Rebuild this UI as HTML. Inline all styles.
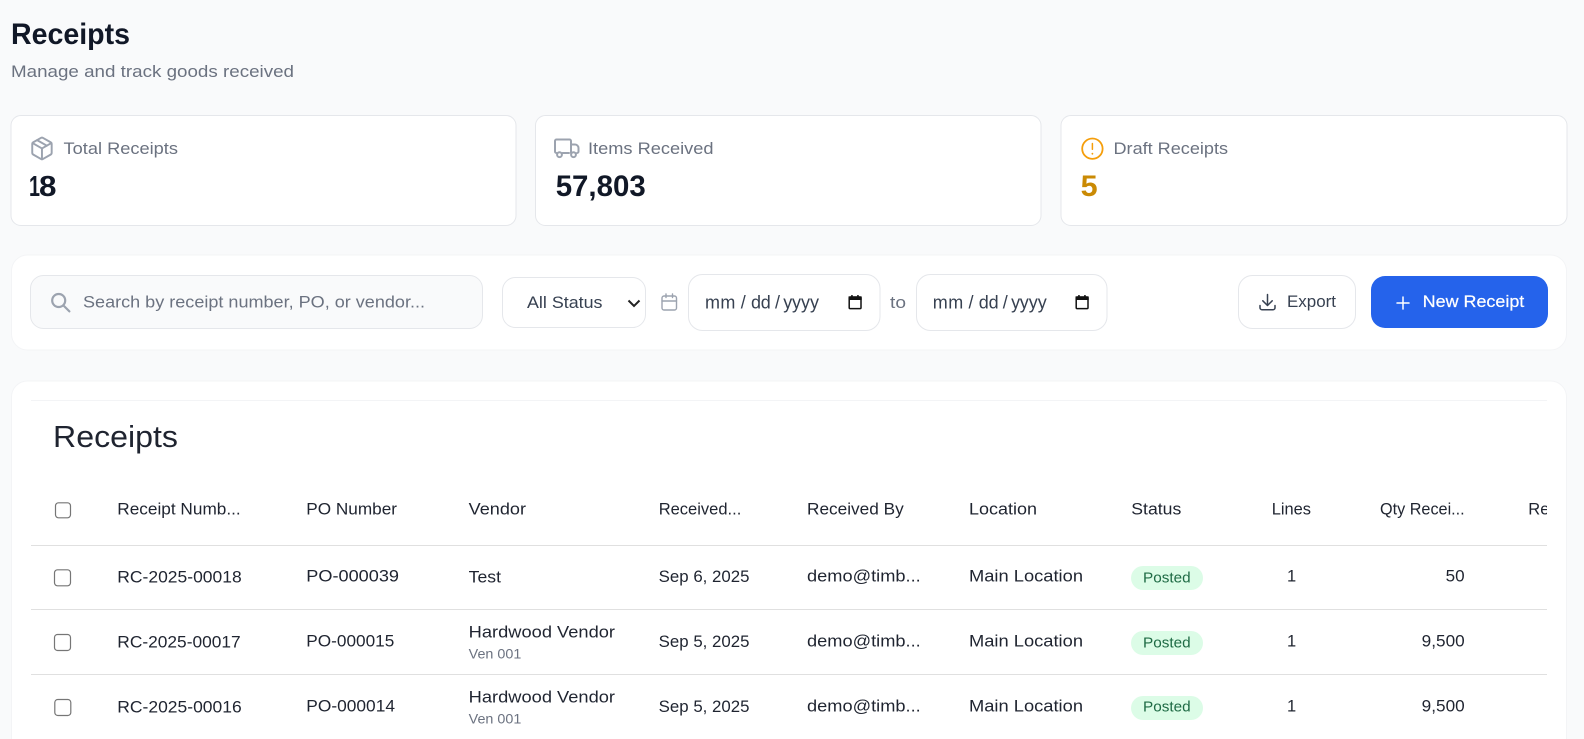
<!DOCTYPE html>
<html lang="en">
<head>
<meta charset="utf-8">
<title>Receipts</title>
<style>
html,body{margin:0;padding:0;width:1584px;height:739px;overflow:hidden;background:#f9fafb}
svg{display:block;font-family:"Liberation Sans",Arial,sans-serif}
.t{font-size:16.5px;fill:#1f2430;transform:translateY(-.6px)}
.g{font-size:17px;fill:#6b7280;transform:translateY(-.5px)}
.b{font-size:14.5px;fill:#1f6b45;transform:translateY(-.6px)}
.v{font-size:14px;fill:#6b7280;transform:translateY(-.6px)}
.d{font-size:18px;fill:#374151}
.ic{fill:none;stroke-linecap:round;stroke-linejoin:round}
</style>
</head>
<body>
<svg width="1584" height="739" viewBox="0 0 1584 739" xmlns="http://www.w3.org/2000/svg">
<defs><clipPath id="c"><rect x="31" y="490" width="1516" height="60"/></clipPath></defs>
<rect width="1584" height="739" fill="#f9fafb"/>

<!-- header -->
<text x="11" y="44" font-size="30" font-weight="700" fill="#111827" textLength="119" lengthAdjust="spacingAndGlyphs">Receipts</text>
<text x="11" y="77" class="g" style="transform:none" textLength="283" lengthAdjust="spacingAndGlyphs">Manage and track goods received</text>

<!-- stat cards -->
<rect x="11" y="115.5" width="505" height="110" rx="10" fill="#fff" stroke="#e5e7eb"/>
<rect x="535.5" y="115.5" width="505.5" height="110" rx="10" fill="#fff" stroke="#e5e7eb"/>
<rect x="1061" y="115.5" width="506" height="110" rx="10" fill="#fff" stroke="#e5e7eb"/>

<g class="ic" stroke="#9ca3af" stroke-width="1.8" transform="translate(29 135.5) scale(1.08)">
<path d="M11 21.73a2 2 0 0 0 2 0l7-4A2 2 0 0 0 21 16V8a2 2 0 0 0-1-1.73l-7-4a2 2 0 0 0-2 0l-7 4A2 2 0 0 0 3 8v8a2 2 0 0 0 1 1.73z"/>
<path d="M12 22V12"/><path d="m3.3 7 8.7 5 8.7-5"/><path d="m7.5 4.27 9 5.15"/>
</g>
<text x="63.5" y="154.3" class="g" textLength="114.5" lengthAdjust="spacingAndGlyphs">Total Receipts</text>
<text x="29" y="196" font-size="29" font-weight="700" fill="#111827" textLength="11" lengthAdjust="spacingAndGlyphs">1</text>
<text x="39" y="196" font-size="29" font-weight="700" fill="#111827" textLength="17.5" lengthAdjust="spacingAndGlyphs">8</text>

<g class="ic" stroke="#9ca3af" stroke-width="2">
<path d="M562.5 153h6.5M571 153V141a1.5 1.5 0 0 0-1.5-1.5H556.5A1.5 1.5 0 0 0 555 141v10.5a1.5 1.5 0 0 0 1.5 1.5"/>
<path d="M571 144.5h4a3.5 3.5 0 0 1 3.5 3.5v3.5a1.5 1.5 0 0 1-1.5 1.5"/>
<circle cx="559.5" cy="154.7" r="2.4"/><circle cx="573.5" cy="154.7" r="2.4"/>
</g>
<text x="588" y="154.3" class="g" textLength="125.5" lengthAdjust="spacingAndGlyphs">Items Received</text>
<text x="555.7" y="196" font-size="29.5" font-weight="700" fill="#111827" textLength="90" lengthAdjust="spacingAndGlyphs">57,803</text>

<g class="ic" stroke="#f59e0b" stroke-width="1.8">
<circle cx="1092.4" cy="148.7" r="10.2"/>
<path d="M1092.4 143.5v5.8" stroke-width="1.5"/><path d="M1092.4 153.6v.2"/>
</g>
<text x="1113.5" y="154.3" class="g" textLength="114.5" lengthAdjust="spacingAndGlyphs">Draft Receipts</text>
<text x="1080.6" y="196" font-size="29.5" font-weight="700" fill="#ca8a04" textLength="17" lengthAdjust="spacingAndGlyphs">5</text>

<!-- toolbar -->
<rect x="11.5" y="255" width="1555" height="95" rx="16" fill="#fff" stroke="#f3f4f6"/>
<rect x="30.5" y="275.5" width="452" height="53" rx="13" fill="#f9fafb" stroke="#e5e7eb"/>
<g class="ic" stroke="#9ca3af" stroke-width="2.2">
<circle cx="58.7" cy="300.5" r="6.5"/><path d="M63.6 305.6l5.8 5.8"/>
</g>
<text x="83" y="307.3" font-size="16.5" fill="#6b7280" textLength="342" lengthAdjust="spacingAndGlyphs">Search by receipt number, PO, or vendor...</text>

<rect x="502.5" y="277.5" width="143" height="50" rx="13" fill="#fff" stroke="#e5e7eb"/>
<text x="527" y="308" font-size="16.5" fill="#374151" textLength="75.5" lengthAdjust="spacingAndGlyphs">All Status</text>
<path d="M628.5 300.5l5.5 5.5 5.5-5.5" fill="none" stroke="#222" stroke-width="2"/>

<g class="ic" stroke="#9ca3af" stroke-width="1.4">
<rect x="662" y="296" width="14.5" height="14" rx="2"/><path d="M662 301h14.5"/><path d="M666 294v3.5"/><path d="M672.5 294v3.5"/>
</g>

<rect x="688.5" y="274.5" width="191.5" height="56" rx="14" fill="#fff" stroke="#e5e7eb"/>
<text class="d" y="308.3" x="705 720.4 740.7 751 760.8 775 783.3 792 801 810">mm/dd/yyyy</text>
<g>
<rect x="849.2" y="297" width="11.8" height="11.6" rx="1" fill="#fff" stroke="#111" stroke-width="1.5"/>
<rect x="848.5" y="296.4" width="13.2" height="3.6" fill="#111"/>
<rect x="851.2" y="295" width="1.5" height="2" fill="#111"/><rect x="857.2" y="295" width="1.5" height="2" fill="#111"/>
</g>
<text x="890" y="308" font-size="17" fill="#6b7280" textLength="16" lengthAdjust="spacingAndGlyphs">to</text>

<rect x="916.5" y="274.5" width="190.5" height="56" rx="14" fill="#fff" stroke="#e5e7eb"/>
<text class="d" y="308.3" x="932.8 948.2 968.5 978.8 988.6 1002.8 1011.1 1019.8 1028.8 1037.8">mm/dd/yyyy</text>
<g>
<rect x="1076.2" y="297" width="11.8" height="11.6" rx="1" fill="#fff" stroke="#111" stroke-width="1.5"/>
<rect x="1075.5" y="296.4" width="13.2" height="3.6" fill="#111"/>
<rect x="1078.2" y="295" width="1.5" height="2" fill="#111"/><rect x="1084.2" y="295" width="1.5" height="2" fill="#111"/>
</g>

<rect x="1238.5" y="275.5" width="117" height="53" rx="14" fill="#fff" stroke="#e5e7eb"/>
<g class="ic" stroke="#374151" stroke-width="1.5">
<path d="M1267.5 294.5v10.5"/><path d="M1262.8 300.8l4.7 4.7 4.7-4.7"/>
<path d="M1260 305.5v2.2a2 2 0 0 0 2 2h11a2 2 0 0 0 2-2v-2.2"/>
</g>
<text x="1287" y="307" font-size="16.5" fill="#374151" textLength="49" lengthAdjust="spacingAndGlyphs">Export</text>

<rect x="1371" y="276" width="177" height="52" rx="14" fill="#2563eb"/>
<path d="M1403 297v12M1397 303h12" fill="none" stroke="#fff" stroke-width="1.5" stroke-linecap="round"/>
<text x="1422.7" y="307" font-size="16.5" fill="#fff" stroke="#fff" stroke-width=".2" textLength="101.6" lengthAdjust="spacingAndGlyphs">New Receipt</text>

<!-- table panel -->
<path d="M11.5 739V397a16 16 0 0 1 16-16H1550.5a16 16 0 0 1 16 16V739" fill="#fff" stroke="#f3f4f6"/>
<rect x="31" y="400" width="1516" height="1" fill="#f3f4f6"/>
<text x="53" y="447" font-size="31" fill="#1f2430" textLength="125" lengthAdjust="spacingAndGlyphs">Receipts</text>

<rect x="31" y="545" width="1516" height="1" fill="#e0e0e0"/>
<rect x="31" y="609" width="1516" height="1" fill="#e0e0e0"/>
<rect x="31" y="674" width="1516" height="1" fill="#e0e0e0"/>

<!-- header row -->
<rect x="55.5" y="502.8" width="15" height="15" rx="3" fill="#fff" stroke="#767676" stroke-width="1.2"/>
<text class="t" x="117.3" y="515" textLength="123.4" lengthAdjust="spacingAndGlyphs">Receipt Numb...</text>
<text class="t" x="306.3" y="515" textLength="90.7" lengthAdjust="spacingAndGlyphs">PO Number</text>
<text class="t" x="468.7" y="515" textLength="57.3" lengthAdjust="spacingAndGlyphs">Vendor</text>
<text class="t" x="658.7" y="515" textLength="82.6" lengthAdjust="spacingAndGlyphs">Received...</text>
<text class="t" x="807" y="515" textLength="96.7" lengthAdjust="spacingAndGlyphs">Received By</text>
<text class="t" x="969" y="515" textLength="68" lengthAdjust="spacingAndGlyphs">Location</text>
<text class="t" x="1131.3" y="515" textLength="50" lengthAdjust="spacingAndGlyphs">Status</text>
<text class="t" x="1271.7" y="515" textLength="39.3" lengthAdjust="spacingAndGlyphs">Lines</text>
<text class="t" x="1380" y="515" textLength="84.7" lengthAdjust="spacingAndGlyphs">Qty Recei...</text>
<g clip-path="url(#c)"><text class="t" x="1528.3" y="515">Re</text></g>

<!-- row 1 -->
<rect x="54.5" y="569.8" width="16" height="16" rx="3" fill="#fff" stroke="#767676" stroke-width="1.2"/>
<text class="t" x="117.3" y="583.3" textLength="124.4" lengthAdjust="spacingAndGlyphs">RC-2025-00018</text>
<text class="t" x="306.3" y="582.3" textLength="92.7" lengthAdjust="spacingAndGlyphs">PO-000039</text>
<text class="t" x="468.7" y="583.3" textLength="32.3" lengthAdjust="spacingAndGlyphs">Test</text>
<text class="t" x="658.7" y="582.7" textLength="90.8" lengthAdjust="spacingAndGlyphs">Sep 6, 2025</text>
<text class="t" x="807" y="582" textLength="113.7" lengthAdjust="spacingAndGlyphs">demo@timb...</text>
<text class="t" x="969" y="582" textLength="114" lengthAdjust="spacingAndGlyphs">Main Location</text>
<rect x="1131" y="566" width="72" height="24" rx="12" fill="#dcfce7"/>
<text class="b" x="1143" y="583.3" textLength="47.7" lengthAdjust="spacingAndGlyphs">Posted</text>
<text class="t" x="1287" y="582.3">1</text>
<text class="t" x="1445.7" y="582.3" textLength="19" lengthAdjust="spacingAndGlyphs">50</text>

<!-- row 2 -->
<rect x="54.5" y="634.5" width="16" height="16" rx="3" fill="#fff" stroke="#767676" stroke-width="1.2"/>
<text class="t" x="117.3" y="648.3" textLength="123.4" lengthAdjust="spacingAndGlyphs">RC-2025-00017</text>
<text class="t" x="306.3" y="647.3" textLength="88" lengthAdjust="spacingAndGlyphs">PO-000015</text>
<text class="t" x="468.7" y="638.3" textLength="146.3" lengthAdjust="spacingAndGlyphs">Hardwood Vendor</text>
<text class="v" x="468.7" y="659.3" textLength="52.6" lengthAdjust="spacingAndGlyphs">Ven 001</text>
<text class="t" x="658.7" y="647.7" textLength="90.8" lengthAdjust="spacingAndGlyphs">Sep 5, 2025</text>
<text class="t" x="807" y="647" textLength="113.7" lengthAdjust="spacingAndGlyphs">demo@timb...</text>
<text class="t" x="969" y="647" textLength="114" lengthAdjust="spacingAndGlyphs">Main Location</text>
<rect x="1131" y="631" width="72" height="24" rx="12" fill="#dcfce7"/>
<text class="b" x="1143" y="648.3" textLength="47.7" lengthAdjust="spacingAndGlyphs">Posted</text>
<text class="t" x="1287" y="647.3">1</text>
<text class="t" x="1421.7" y="647.3" textLength="43" lengthAdjust="spacingAndGlyphs">9,500</text>

<!-- row 3 -->
<rect x="54.8" y="699.5" width="16" height="16" rx="3" fill="#fff" stroke="#767676" stroke-width="1.2"/>
<text class="t" x="117.3" y="713.3" textLength="124.4" lengthAdjust="spacingAndGlyphs">RC-2025-00016</text>
<text class="t" x="306.3" y="712.3" textLength="88.7" lengthAdjust="spacingAndGlyphs">PO-000014</text>
<text class="t" x="468.7" y="703.3" textLength="146.3" lengthAdjust="spacingAndGlyphs">Hardwood Vendor</text>
<text class="v" x="468.7" y="724.3" textLength="52.6" lengthAdjust="spacingAndGlyphs">Ven 001</text>
<text class="t" x="658.7" y="712.7" textLength="90.8" lengthAdjust="spacingAndGlyphs">Sep 5, 2025</text>
<text class="t" x="807" y="712" textLength="113.7" lengthAdjust="spacingAndGlyphs">demo@timb...</text>
<text class="t" x="969" y="712" textLength="114" lengthAdjust="spacingAndGlyphs">Main Location</text>
<rect x="1131" y="696" width="72" height="24" rx="12" fill="#dcfce7"/>
<text class="b" x="1143" y="712.3" textLength="47.7" lengthAdjust="spacingAndGlyphs">Posted</text>
<text class="t" x="1287" y="712.3">1</text>
<text class="t" x="1421.7" y="712.3" textLength="43" lengthAdjust="spacingAndGlyphs">9,500</text>
</svg>
</body>
</html>
